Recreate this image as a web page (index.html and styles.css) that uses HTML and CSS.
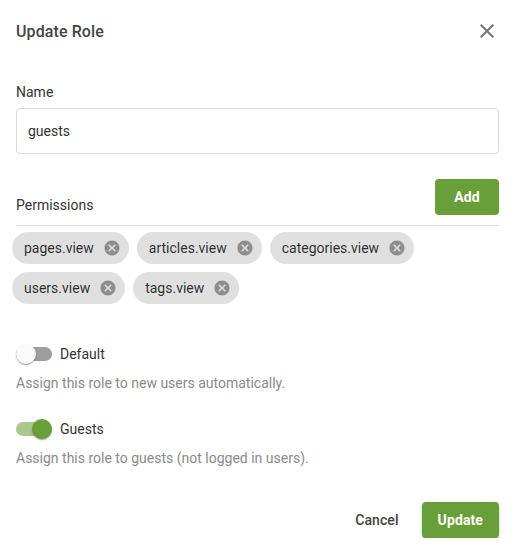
FILE: index.html
```html
<!DOCTYPE html>
<html>
<head>
<meta charset="utf-8">
<link rel="stylesheet" href="styles.css">
</head>
<body>
<div class="dialog">
  <div class="header">
    <div class="title">Update Role</div>
    <svg class="close" viewBox="0 0 24 24" width="24" height="24"><path d="M19,6.41L17.59,5L12,10.59L6.41,5L5,6.41L10.59,12L5,17.59L6.41,19L12,13.41L17.59,19L19,17.59L13.41,12L19,6.41Z" fill="#757575"/></svg>
  </div>
  <div class="field">
    <div class="label">Name</div>
    <div class="input">guests</div>
  </div>
  <div class="perm-head">
    <div class="label">Permissions</div>
    <button class="btn primary">Add</button>
  </div>
  <div class="chips">
    <span class="chip">pages.view<svg class="x" viewBox="0 0 24 24"><path d="M12,2C17.53,2 22,6.47 22,12C22,17.53 17.53,22 12,22C6.47,22 2,17.53 2,12C2,6.47 6.47,2 12,2M15.59,7L12,10.59L8.41,7L7,8.41L10.59,12L7,15.59L8.41,17L12,13.41L15.59,17L17,15.59L13.41,12L17,8.41L15.59,7Z"/></svg></span>
    <span class="chip">articles.view<svg class="x" viewBox="0 0 24 24"><path d="M12,2C17.53,2 22,6.47 22,12C22,17.53 17.53,22 12,22C6.47,22 2,17.53 2,12C2,6.47 6.47,2 12,2M15.59,7L12,10.59L8.41,7L7,8.41L10.59,12L7,15.59L8.41,17L12,13.41L15.59,17L17,15.59L13.41,12L17,8.41L15.59,7Z"/></svg></span>
    <span class="chip">categories.view<svg class="x" viewBox="0 0 24 24"><path d="M12,2C17.53,2 22,6.47 22,12C22,17.53 17.53,22 12,22C6.47,22 2,17.53 2,12C2,6.47 6.47,2 12,2M15.59,7L12,10.59L8.41,7L7,8.41L10.59,12L7,15.59L8.41,17L12,13.41L15.59,17L17,15.59L13.41,12L17,8.41L15.59,7Z"/></svg></span>
    <span class="chip">users.view<svg class="x" viewBox="0 0 24 24"><path d="M12,2C17.53,2 22,6.47 22,12C22,17.53 17.53,22 12,22C6.47,22 2,17.53 2,12C2,6.47 6.47,2 12,2M15.59,7L12,10.59L8.41,7L7,8.41L10.59,12L7,15.59L8.41,17L12,13.41L15.59,17L17,15.59L13.41,12L17,8.41L15.59,7Z"/></svg></span>
    <span class="chip">tags.view<svg class="x" viewBox="0 0 24 24"><path d="M12,2C17.53,2 22,6.47 22,12C22,17.53 17.53,22 12,22C6.47,22 2,17.53 2,12C2,6.47 6.47,2 12,2M15.59,7L12,10.59L8.41,7L7,8.41L10.59,12L7,15.59L8.41,17L12,13.41L15.59,17L17,15.59L13.41,12L17,8.41L15.59,7Z"/></svg></span>
  </div>
  <div class="switch-block first">
    <div class="switch-row">
      <span class="switch off"><span class="track"></span><span class="thumb"></span></span>
      <span class="switch-label">Default</span>
    </div>
    <div class="hint">Assign this role to new users automatically.</div>
  </div>
  <div class="switch-block">
    <div class="switch-row">
      <span class="switch on"><span class="track"></span><span class="thumb"></span></span>
      <span class="switch-label">Guests</span>
    </div>
    <div class="hint">Assign this role to guests (not logged in users).</div>
  </div>
  <div class="actions">
    <button class="btn text">Cancel</button>
    <button class="btn primary raised">Update</button>
  </div>
</div>
</body>
</html>
```
FILE: styles.css
```css
* { box-sizing: border-box; }
html, body { margin: 0; padding: 0; background: #fff; }
body {
  font-family: Roboto, "Liberation Sans", sans-serif;
  color: rgba(0,0,0,0.87);
  font-size: 14px;
}
.dialog { width: 515px; padding: 16px 16px 0; }
.header {
  display: flex;
  justify-content: space-between;
  align-items: center;
  height: 30px;
}
.title { font-size: 16px; font-weight: 500; color: #444; letter-spacing: 0.1px; }
.close { display: block; }
.field { margin-top: 36px; }
.label { font-size: 14px; line-height: 20px; color: #333; }
.input {
  margin-top: 6px;
  height: 46px;
  border: 1px solid #dcdcdc;
  border-radius: 4px;
  padding: 0 11px;
  display: flex;
  align-items: center;
  color: #333;
}
.perm-head {
  margin-top: 25px;
  display: flex;
  justify-content: space-between;
  align-items: flex-end;
  padding-bottom: 10px;
  border-bottom: 1px solid #e0e0e0;
}
.btn {
  font-family: Roboto, "Liberation Sans", sans-serif;
  font-size: 14px;
  font-weight: 500;
  border: none;
  border-radius: 4px;
  height: 36px;
  padding: 0 16px;
  cursor: pointer;
  letter-spacing: 0.1px;
}
.btn.primary { background: #689f38; color: #fff; min-width: 64px; font-weight: 700; }
.btn.raised { box-shadow: 0 3px 1px -2px rgba(0,0,0,.2), 0 2px 2px 0 rgba(0,0,0,.14), 0 1px 5px 0 rgba(0,0,0,.12); }
.btn.text { background: transparent; color: #424242; }
.chips {
  margin: 6px 0 0 -4px;
  display: flex;
  flex-wrap: wrap;
  gap: 8px;
}
.chip {
  display: inline-flex;
  align-items: center;
  height: 32px;
  border-radius: 16px;
  background: #e0e0e0;
  padding: 0 12px;
  font-size: 14px;
  color: rgba(0,0,0,0.82);
}
.chip .x {
  width: 18px;
  height: 18px;
  margin-left: 9px;
  margin-right: -4px;
  fill: #8e8e8e;
}
.switch-block.first { margin-top: 40px; }
.switch-block { margin-top: 26px; }
.switch-row { display: flex; align-items: center; height: 20px; }
.switch { position: relative; width: 36px; height: 20px; display: inline-block; }
.switch .track {
  position: absolute;
  left: 0; top: 3px;
  width: 36px; height: 14px;
  border-radius: 7px;
}
.switch .thumb {
  position: absolute;
  top: 0;
  width: 20px; height: 20px;
  border-radius: 50%;
  box-shadow: 0 2px 1px -1px rgba(0,0,0,.2), 0 1px 1px 0 rgba(0,0,0,.14), 0 1px 3px 0 rgba(0,0,0,.12);
}
.switch.off .track { background: #9e9e9e; }
.switch.off .thumb { left: 0; background: #fafafa; }
.switch.on .track { background: #a8c98e; }
.switch.on .thumb { left: 16px; background: #689f38; }
.switch-label { margin-left: 8px; color: #333; }
.hint { margin-top: 9px; line-height: 20px; color: #8a8a8a; }
.actions {
  margin-top: 34px;
  display: flex;
  justify-content: flex-end;
  gap: 7px;
}
```
